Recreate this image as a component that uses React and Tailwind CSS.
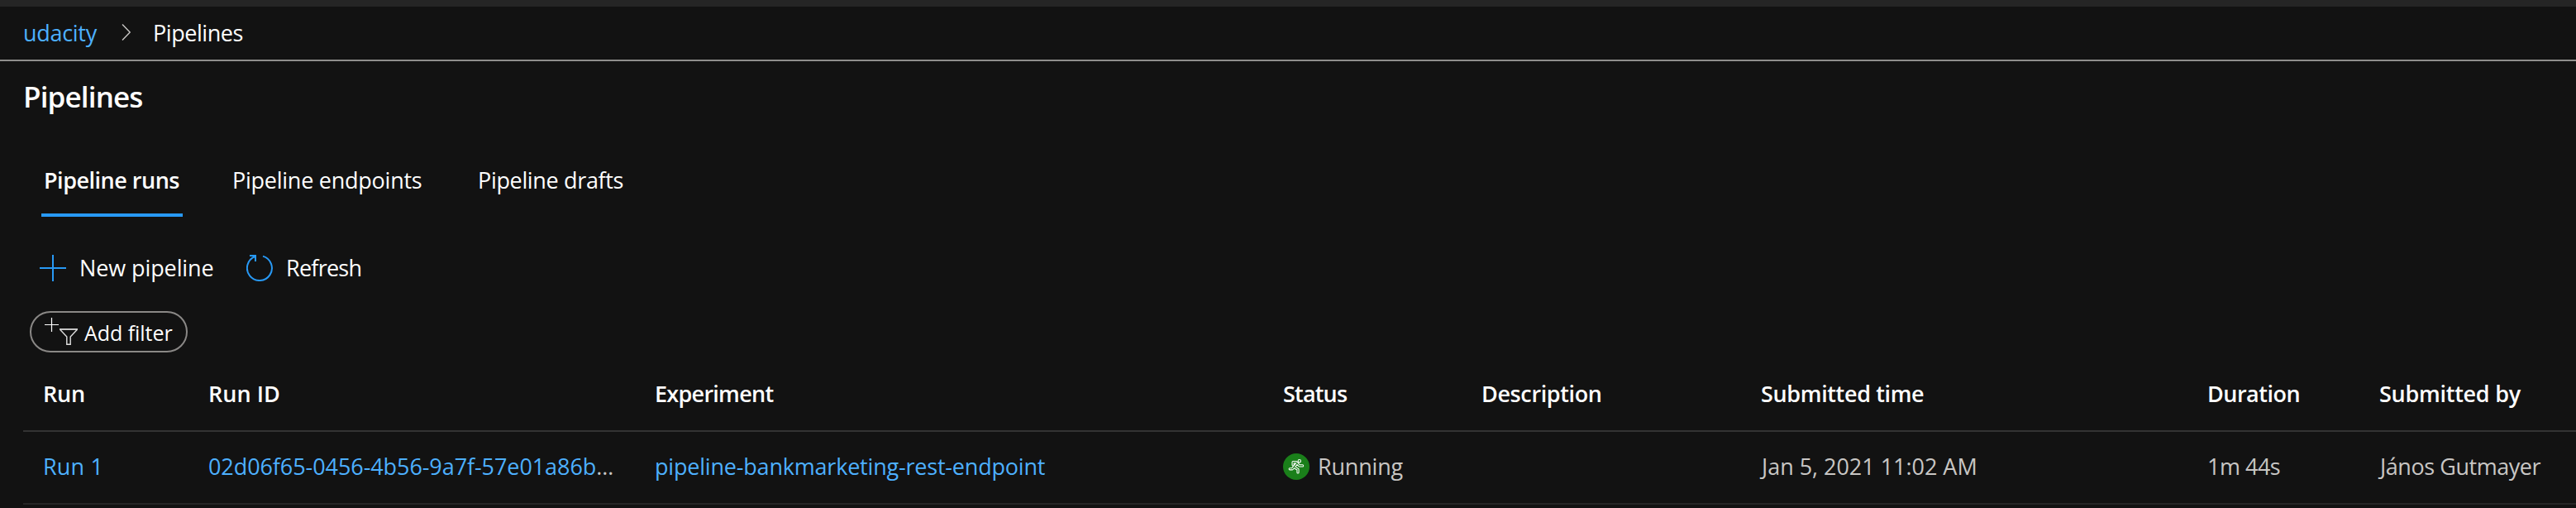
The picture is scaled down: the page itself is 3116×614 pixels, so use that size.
import React from "react";

const columns = [
  { label: "Run", spacing: "tracking-[-0.2px]" },
  { label: "Run ID", spacing: "tracking-[0.05px]" },
  { label: "Experiment", spacing: "tracking-[-0.73px]" },
  { label: "Status", spacing: "tracking-[-0.82px]" },
  { label: "Description", spacing: "tracking-[-0.38px]" },
  { label: "Submitted time", spacing: "tracking-[-0.36px]" },
  { label: "Duration", spacing: "tracking-[-0.49px]" },
  { label: "Submitted by", spacing: "tracking-[-0.27px]" },
];

const rowGrid =
  "grid grid-cols-[200px_540px_760px_240px_338px_540px_208px_1fr] pl-6 ml-7 border-b-2 whitespace-nowrap";

function ChevronIcon() {
  return (
    <svg className="mt-2 ml-[29px] h-5 w-3 shrink-0" viewBox="0 0 12 20" fill="none" stroke="#c8c6c4" strokeWidth="1.4">
      <path d="M1 0.5 L10.2 10 L1 19.5" />
    </svg>
  );
}

function PlusIcon() {
  return (
    <svg className="mt-[3px] size-8 shrink-0" viewBox="0 0 32 32" fill="none" stroke="#2899f5" strokeWidth="2">
      <path d="M16 0 V32 M0 16 H32" />
    </svg>
  );
}

function RefreshIcon() {
  return (
    <svg className="mt-[3px] size-8 shrink-0" viewBox="0 0 32 32" fill="none" stroke="#2899f5" strokeWidth="2">
      <path d="M20 1.6 A15 15 0 1 1 10.6 2" />
      <path d="M4 1 H11 V8" />
    </svg>
  );
}

function AddFilterIcon() {
  return (
    <svg className="mt-1.5 h-[34px] w-[41px] shrink-0" viewBox="0 0 41 34" fill="none" stroke="#ffffff">
      <path d="M8.5 0 V17 M0 8.5 H17" strokeWidth="1.2" />
      <path d="M18 14 H40" strokeWidth="2" stroke="#c4c4c4" />
      <path d="M18.8 14.6 L26.8 23 V32.2 H31.2 V23 L39.2 14.6" strokeWidth="1.4" stroke="#e0e0e0" />
    </svg>
  );
}

const limbs =
  "M12.1 14 V10.6 H15.8 L17.2 11.6 L13 16.6 L11.2 18.8 H8.2 M17.4 12.4 L19.8 14.9 H23.6 M13.8 16.8 L18 19.4 V23";

function RunningIcon() {
  return (
    <svg className="mt-[3px] size-8 shrink-0" viewBox="0 0 32 32" fill="none" strokeLinecap="round" strokeLinejoin="round">
      <circle cx="16" cy="16" r="16" fill="#1a7f1a" />
      <path d={limbs} stroke="#ffffff" strokeWidth="3.2" />
      <path d={limbs} stroke="#1a7f1a" strokeWidth="1.1" />
      <circle cx="19.8" cy="9.2" r="1.7" fill="#1a7f1a" stroke="#ffffff" strokeWidth="1.1" />
    </svg>
  );
}

export default function App() {
  return (
    <div className="h-[614px] w-full overflow-hidden bg-[#121212] font-['Open_Sans','Noto_Sans',sans-serif] text-[27px] leading-[37px] text-white">
      <div className="h-2 bg-[#252525]" />
      <nav className="flex h-[66px] items-start border-b-2 border-[#8f8e8c] pt-[13px] pl-7">
        <a className="w-[90px] tracking-[-0.3px] text-[#4db0ff]">udacity</a>
        <ChevronIcon />
        <span className="ml-[26px] tracking-[-0.45px]">Pipelines</span>
      </nav>

      <h1 className="mt-[19px] pl-7 text-[35px] leading-[47px] font-semibold tracking-[-0.85px]">Pipelines</h1>

      <div className="mt-[59px] flex pl-[50px] whitespace-nowrap">
        <div className="w-[171px] border-b-4 border-[#2899f5] pb-[22px] pl-[3px] font-semibold tracking-[-0.49px]">
          Pipeline runs
        </div>
        <div className="ml-[60px] w-[297px] tracking-[-0.25px]">Pipeline endpoints</div>
        <div className="tracking-[-0.34px]">Pipeline drafts</div>
      </div>

      <div className="mt-[43px] flex h-[37px] items-start pl-12 whitespace-nowrap">
        <PlusIcon />
        <span className="ml-4 w-[202px] tracking-[-0.1px]">New pipeline</span>
        <RefreshIcon />
        <span className="ml-4 tracking-[-0.75px]">Refresh</span>
      </div>

      <button className="mt-[34px] ml-9 flex h-[50px] w-[191px] items-start rounded-[25px] border-2 border-[#8a8886] pl-4 whitespace-nowrap">
        <AddFilterIcon />
        <span className="mt-[7px] ml-[7px] text-[25px] leading-[34px] tracking-[-0.05px]">Add filter</span>
      </button>

      <div className={`${rowGrid} h-24 border-[#333333] pt-[31px] font-semibold`}>
        {columns.map((c) => (
          <div key={c.label} className={c.spacing}>
            {c.label}
          </div>
        ))}
      </div>
      <div className={`${rowGrid} h-[88px] border-[#262626] pt-[23px] text-[#c8c6c4]`}>
        <div className="tracking-[0.2px] text-[#4db0ff]">Run 1</div>
        <div className="tracking-[-0.08px]">
          <span className="text-[#4db0ff]">02d06f65-0456-4b56-9a7f-57e01a86b</span>…
        </div>
        <div className="tracking-[-0.2px] text-[#4db0ff]">pipeline-bankmarketing-rest-endpoint</div>
        <div className="flex items-start">
          <RunningIcon />
          <span className="ml-2.5 tracking-[-0.2px]">Running</span>
        </div>
        <div />
        <div className="pl-px tracking-[-0.03px]">Jan 5, 2021 11:02 AM</div>
        <div className="tracking-[-0.5px]">1m 44s</div>
        <div className="pl-px tracking-[-0.45px]">János Gutmayer</div>
      </div>
    </div>
  );
}
